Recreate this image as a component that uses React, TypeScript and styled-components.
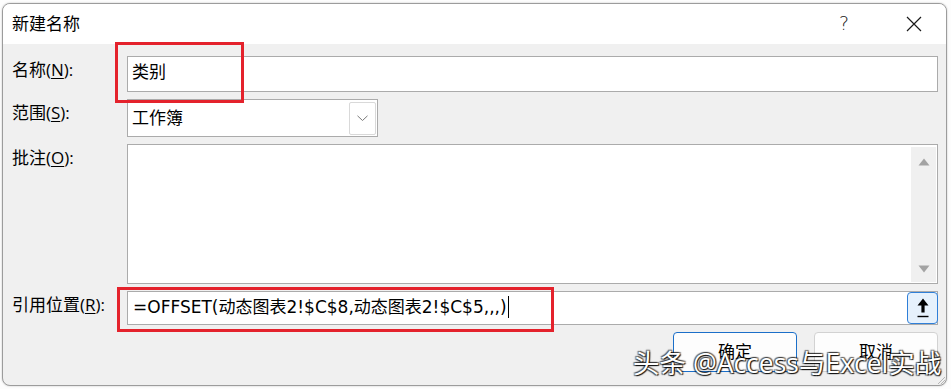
import React from "react";
import styled, { createGlobalStyle } from "styled-components";

const Global = createGlobalStyle`
  html, body { margin: 0; padding: 0; background: #ffffff; }
  body { font-family: "Open Sans", "Noto Sans CJK SC", sans-serif; }
  * { box-sizing: border-box; }
`;

const Page = styled.div`
  width: 951px;
  height: 389px;
  padding: 3px 4px 3px 2px;
  background: #fdfdfd;
`;

const Dialog = styled.div`
  position: relative;
  width: 945px;
  height: 383px;
  border: 1px solid #9c9c9c;
  border-radius: 8px;
  overflow: hidden;
  background: #f0f0f0;
  display: flex;
  flex-direction: column;
  box-shadow: 0 0 2px rgba(0, 0, 0, 0.25);
`;

const TitleBar = styled.div`
  height: 40px;
  flex: none;
  background: #ffffff;
  display: flex;
  align-items: center;
  padding-left: 9px;
  padding-right: 24px;
`;

const Title = styled.div`
  flex: 1;
  font-family: "Noto Sans CJK SC", sans-serif;
  font-size: 17px;
  color: #000;
  line-height: 20px;
  margin-top: -2px;
`;

const Help = styled.div`
  font-family: "DejaVu Sans", sans-serif;
  font-size: 19px;
  font-weight: 300;
  color: #1a1a1a;
  margin-right: 57px;
  margin-top: -2px;
`;

const Body = styled.div`
  flex: 1;
  display: grid;
  grid-template-columns: 115px 1fr;
  grid-template-rows: 36px 38px 140px 34px 40px;
  row-gap: 7px;
  padding: 12px 8px 0 9px;
`;

const Label = styled.div`
  font-size: 17px;
  line-height: 28px;
  color: #000;
  white-space: nowrap;
`;

const Key = styled.span`
  text-decoration: underline;
  text-underline-offset: 2px;
  text-decoration-thickness: 1px;
`;

const Field = styled.div`
  border: 1px solid #ababab;
  background: #ffffff;
  display: flex;
  align-items: center;
  font-size: 17px;
  color: #000;
  padding-left: 4px;
`;

const FieldText = styled.span<{ $dy?: number }>`
  flex: 1;
  white-space: nowrap;
  line-height: 24px;
  position: relative;
  top: ${(p) => p.$dy ?? 0}px;
`;

const FormulaText = styled(FieldText)`
  font-family: "DejaVu Sans", "Noto Sans CJK SC", sans-serif;
  padding-left: 1px;
`;

const Caret = styled.span`
  display: inline-block;
  width: 1px;
  height: 22px;
  background: #000;
  vertical-align: middle;
  margin-left: 1px;
  position: relative;
  top: -1px;
`;

const SelectButton = styled.div`
  width: 27px;
  align-self: stretch;
  margin: 2px 1px 1px 0;
  border: 1px solid #d9d9d9;
  border-radius: 2px;
  background: #ffffff;
  display: flex;
  align-items: center;
  justify-content: center;
`;

const SelectField = styled(Field)`
  width: 251px;
`;

const TextArea = styled.div`
  border: 1px solid #ababab;
  background: #ffffff;
  display: flex;
  justify-content: flex-end;
  padding: 2px 1px 1px 0;
`;

const ScrollBar = styled.div`
  width: 25px;
  background: #f0f0f0;
  display: flex;
  flex-direction: column;
  align-items: center;
  justify-content: space-between;
  padding: 11px 0 9px;
`;

const RefButton = styled.div`
  width: 31px;
  align-self: stretch;
  border: 1px solid #2f7fd8;
  border-radius: 4px;
  background: #e6f1fc;
  display: flex;
  align-items: center;
  justify-content: center;
  margin-right: -1px;
`;

const Buttons = styled.div`
  grid-column: 2;
  display: flex;
  justify-content: flex-end;
  gap: 17px;
`;

const Button = styled.div<{ $primary?: boolean }>`
  width: 124px;
  height: 40px;
  border: 1px solid ${(p) => (p.$primary ? "#1b6fc9" : "#d2d2d2")};
  border-radius: 4px;
  background: #fdfdfd;
  display: flex;
  align-items: center;
  justify-content: center;
  font-size: 17px;
  color: #000;
  padding-bottom: 4px;
`;

const Highlight = styled.div<{ $x: number; $y: number; $w: number; $h: number }>`
  position: absolute;
  left: ${(p) => p.$x}px;
  top: ${(p) => p.$y}px;
  width: ${(p) => p.$w}px;
  height: ${(p) => p.$h}px;
  border: 3px solid #e4222c;
  pointer-events: none;
`;

const Watermark = styled.div`
  position: absolute;
  left: 630px;
  top: 341px;
  font-family: "Open Sans", "Noto Sans CJK SC", sans-serif;
  font-size: 26.5px;
  line-height: 36px;
  color: #ffffff;
  white-space: nowrap;
  text-shadow: 1px 1px 1px rgba(0, 0, 0, 0.9), -1px -1px 1px rgba(0, 0, 0, 0.55),
    1px -1px 1px rgba(0, 0, 0, 0.55), -1px 1px 1px rgba(0, 0, 0, 0.55);
  pointer-events: none;
`;

const Grip = styled.svg`
  position: absolute;
  right: 0;
  bottom: 0;
`;

const Chevron = () => (
  <svg width="11" height="7" viewBox="0 0 11 7">
    <path d="M0.5 0.8 L5.5 5.5 L10.5 0.8" fill="none" stroke="#7a7a7a" strokeWidth="1" />
  </svg>
);

const Close = () => (
  <svg width="16" height="16" viewBox="0 0 16 16">
    <path d="M1 1 L15 15 M15 1 L1 15" stroke="#1a1a1a" strokeWidth="1.2" />
  </svg>
);

const Tri = ({ up }: { up?: boolean }) => (
  <svg width="12" height="8" viewBox="0 0 12 8">
    <path d={up ? "M6 0.5 L11.5 7.5 H0.5 Z" : "M0.5 0.5 H11.5 L6 7.5 Z"} fill="#a3a3a3" />
  </svg>
);

const UpArrow = () => (
  <svg width="12" height="20" viewBox="0 0 12 20">
    <path d="M6 0.5 L11.5 7.5 H7.6 V14.5 H4.4 V7.5 H0.5 Z" fill="#000" />
    <rect x="0.5" y="17.8" width="11" height="1.4" fill="#000" />
  </svg>
);

export default function App() {
  return (
    <>
      <Global />
      <Page>
        <Dialog>
          <TitleBar>
            <Title>新建名称</Title>
            <Help>?</Help>
            <Close />
          </TitleBar>
          <Body>
            <Label>
              名称(<Key>N</Key>):
            </Label>
            <Field>
              <FieldText $dy={-2}>类别</FieldText>
            </Field>

            <Label>
              范围(<Key>S</Key>):
            </Label>
            <SelectField>
              <FieldText>工作簿</FieldText>
              <SelectButton>
                <Chevron />
              </SelectButton>
            </SelectField>

            <Label>
              批注(<Key>O</Key>):
            </Label>
            <TextArea>
              <ScrollBar>
                <Tri up />
                <Tri />
              </ScrollBar>
            </TextArea>

            <Label>
              引用位置(<Key>R</Key>):
            </Label>
            <Field>
              <FormulaText $dy={-1}>
                =OFFSET(动态图表2!$C$8,动态图表2!$C$5,,,)
                <Caret />
              </FormulaText>
              <RefButton>
                <UpArrow />
              </RefButton>
            </Field>

            <Buttons>
              <Button $primary>确定</Button>
              <Button>取消</Button>
            </Buttons>
          </Body>

          <Highlight $x={112} $y={38} $w={129} $h={61} />
          <Highlight $x={114} $y={283} $w={437} $h={45} />
          <Watermark>头条 @Access与Excel实战</Watermark>
          <Grip width="10" height="10" viewBox="0 0 10 10">
            <path d="M9 2 L2 9 M9 5 L5 9 M9 8 L8 9" stroke="#b5b5b5" strokeWidth="1" />
          </Grip>
        </Dialog>
      </Page>
    </>
  );
}
